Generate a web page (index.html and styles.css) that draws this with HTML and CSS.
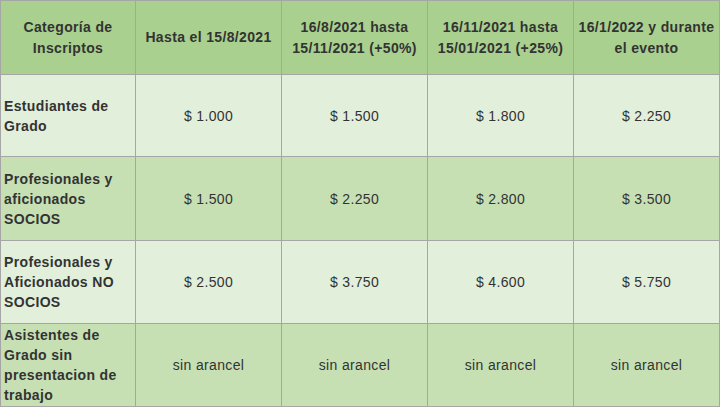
FILE: index.html
```html
<!DOCTYPE html>
<html lang="es">
<head>
<meta charset="utf-8">
<link rel="stylesheet" href="styles.css">
</head>
<body>
<table class="fees">
  <colgroup>
    <col class="c-cat">
    <col class="c-val">
    <col class="c-val">
    <col class="c-val">
    <col class="c-val">
  </colgroup>
  <thead>
    <tr class="head">
      <th>Categoría de Inscriptos</th>
      <th>Hasta el 15/8/2021</th>
      <th>16/8/2021 hasta 15/11/2021 (+50%)</th>
      <th>16/11/2021 hasta 15/01/2021 (+25%)</th>
      <th>16/1/2022 y durante el evento</th>
    </tr>
  </thead>
  <tbody>
    <tr class="light r1">
      <td class="cat">Estudiantes de Grado</td>
      <td>$ 1.000</td>
      <td>$ 1.500</td>
      <td>$ 1.800</td>
      <td>$ 2.250</td>
    </tr>
    <tr class="dark r2">
      <td class="cat">Profesionales y aficionados SOCIOS</td>
      <td>$ 1.500</td>
      <td>$ 2.250</td>
      <td>$ 2.800</td>
      <td>$ 3.500</td>
    </tr>
    <tr class="light r3">
      <td class="cat">Profesionales y Aficionados NO SOCIOS</td>
      <td>$ 2.500</td>
      <td>$ 3.750</td>
      <td>$ 4.600</td>
      <td>$ 5.750</td>
    </tr>
    <tr class="dark r4">
      <td class="cat">Asistentes de Grado sin presentacion de trabajo</td>
      <td>sin arancel</td>
      <td>sin arancel</td>
      <td>sin arancel</td>
      <td>sin arancel</td>
    </tr>
  </tbody>
</table>
</body>
</html>
```

FILE: styles.css
```css
html, body {
  margin: 0;
  padding: 0;
  background: #ffffff;
}

.fees {
  width: 720px;
  border-collapse: collapse;
  table-layout: fixed;
  font-family: "Liberation Sans", Arial, sans-serif;
  font-size: 14px;
  line-height: 20px;
  letter-spacing: 0.35px;
  color: #333333;
}

.c-cat { width: 135px; }
.c-val { width: 146px; }

.fees th,
.fees td {
  border: 1px solid #a6a6a6;
  padding: 1px 3px;
  text-align: center;
  vertical-align: middle;
}

.fees th {
  font-weight: bold;
  line-height: 21px;
}

.head { background: #a9d08e; height: 74px; }
.light { background: #e2efda; }
.dark { background: #c6e0b4; }

.r1 { height: 82px; }
.r2 { height: 84px; }
.r3 { height: 83px; }
.r4 { height: 83px; }

.fees td.cat {
  text-align: left;
  font-weight: bold;
  padding-left: 3px;
}
```
